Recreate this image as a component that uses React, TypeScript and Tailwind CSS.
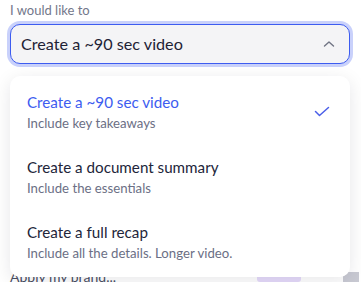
import React from "react";

const items = [
  { title: "Create a ~90 sec video", sub: "Include key takeaways", selected: true },
  { title: "Create a document summary", sub: "Include the essentials", selected: false },
  { title: "Create a full recap", sub: "Include all the details. Longer video.", selected: false },
];

export default function App() {
  return (
    <div className="relative w-[361px] h-[282px] overflow-hidden bg-white" style={{ fontFamily: "Lato, 'Noto Sans', sans-serif" }}>
      <div className="px-[10px] pt-[2px]">
        <div className="text-[13px] leading-[17px] text-[#73778a]">I would like to</div>
        <div className="mt-[5px] h-[40px] w-[340px] rounded-[10px] border border-[#3d5cf0] bg-[#f4f4f6] ring-[3px] ring-[#c9d1fb] flex items-center justify-between pl-[10px] pr-[14px]">
          <span className="text-[16.2px] text-[#1e2235]">Create a ~90 sec video</span>
          <svg width="12" height="8" viewBox="0 0 12 8" fill="none">
            <path d="M1.5 6L6 2L10.5 6" stroke="#6f7383" strokeWidth="1.4" strokeLinecap="round" strokeLinejoin="round" />
          </svg>
        </div>
        <div className="mt-[205px] flex items-center h-[14px]">
          <span className="text-[14px] text-[#4a4f63]">Apply my brand...</span>
          <div className="ml-auto mr-[50px] w-[44px] h-[12px] rounded-[3px] bg-[#e6dbfb]" />
        </div>
      </div>
      <div className="absolute right-[2px] bottom-0 w-[16px] h-[10px] bg-[#c9cad3]" />
      <div className="absolute left-[10px] top-[76px] w-[340px] h-[201px] rounded-[10px] bg-white shadow-[0_4px_18px_rgba(20,20,40,0.10)] pt-[4px]">
        {items.map((it) => (
          <div key={it.title} className="h-[65px] flex items-start justify-between pl-[17px] pr-[20px] pt-[12px]">
            <div className="flex flex-col">
              <span className={`text-[15.2px] leading-[20px] ${it.selected ? "text-[#3d5cf0]" : "text-[#22253a]"}`}>{it.title}</span>
              <span className="mt-[2px] text-[13.2px] leading-[18px] text-[#6b6f85]">{it.sub}</span>
            </div>
            {it.selected && (
              <svg className="mt-[14px]" width="16" height="12" viewBox="0 0 16 12" fill="none">
                <path d="M1.5 5.5L5.5 9.5L14.5 1.5" stroke="#4a5ee8" strokeWidth="1.5" strokeLinecap="round" strokeLinejoin="round" />
              </svg>
            )}
          </div>
        ))}
      </div>
    </div>
  );
}
